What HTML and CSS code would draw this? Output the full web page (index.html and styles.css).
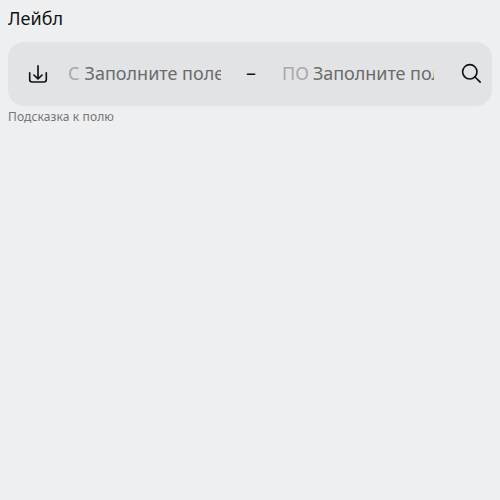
FILE: index.html
```html
<!DOCTYPE html>
<html lang="ru">
<head>
<meta charset="utf-8">
<title>Range</title>
<link rel="stylesheet" href="styles.css">
</head>
<body>
<div class="range">
  <div class="label">Лейбл</div>
  <div class="control">
    <svg class="icon" viewBox="0 0 24 24"><path d="M12 3.800V16.800M7.900 13L12 16.900L16.100 13M3.700 10.800V17.600A2.400 2.400 0 0 0 6.100 20H17.900A2.400 2.400 0 0 0 20.300 17.600V10.800"/></svg>
    <div class="field first"><span class="prefix">С</span><span class="value">Заполните поле</span></div>
    <span class="dash">–</span>
    <div class="field second"><span class="prefix">ПО</span><span class="value">Заполните поле</span></div>
    <svg class="icon search" viewBox="0 0 24 24"><circle cx="10.800" cy="9.800" r="7.200"/><path d="M16 15L21.200 20.200"/></svg>
  </div>
  <div class="hint">Подсказка к полю</div>
</div>
</body>
</html>
```
FILE: styles.css
```css
body { margin: 0; background: #eeeff1; font-family: "Noto Sans", sans-serif; color: #111314; }
.range { padding: 7px 8px 8px; }
.label { height: 22px; margin-bottom: 13px; font-size: 18px; line-height: 22px; }
.control { box-sizing: border-box; display: flex; align-items: center; height: 64px; padding: 0 9px 0 18px; border-radius: 16px; background: #e2e3e5; }
.icon { flex: none; width: 24px; height: 24px; fill: none; stroke: #111314; stroke-width: 1.65; stroke-linecap: round; stroke-linejoin: round; }
.field { display: flex; overflow: hidden; white-space: nowrap; font-size: 18px; line-height: 22px; gap: 4px; padding-bottom: 2px; }
.first { width: 153px; margin-left: 18px; gap: 5px; }
.second { width: 152px; }
.second .value { letter-spacing: -0.04px; }
.prefix { color: #a7a8a9; }
.value { color: #6a6b6c; overflow: hidden; }
.dash { box-sizing: border-box; width: 61px; padding: 0 1px 2px 0; text-align: center; font-size: 20px; line-height: 22px; }
.search { margin-left: auto; }
.hint { margin-top: 4px; font-size: 12px; line-height: 14px; letter-spacing: 0.12px; color: #747576; }
```
